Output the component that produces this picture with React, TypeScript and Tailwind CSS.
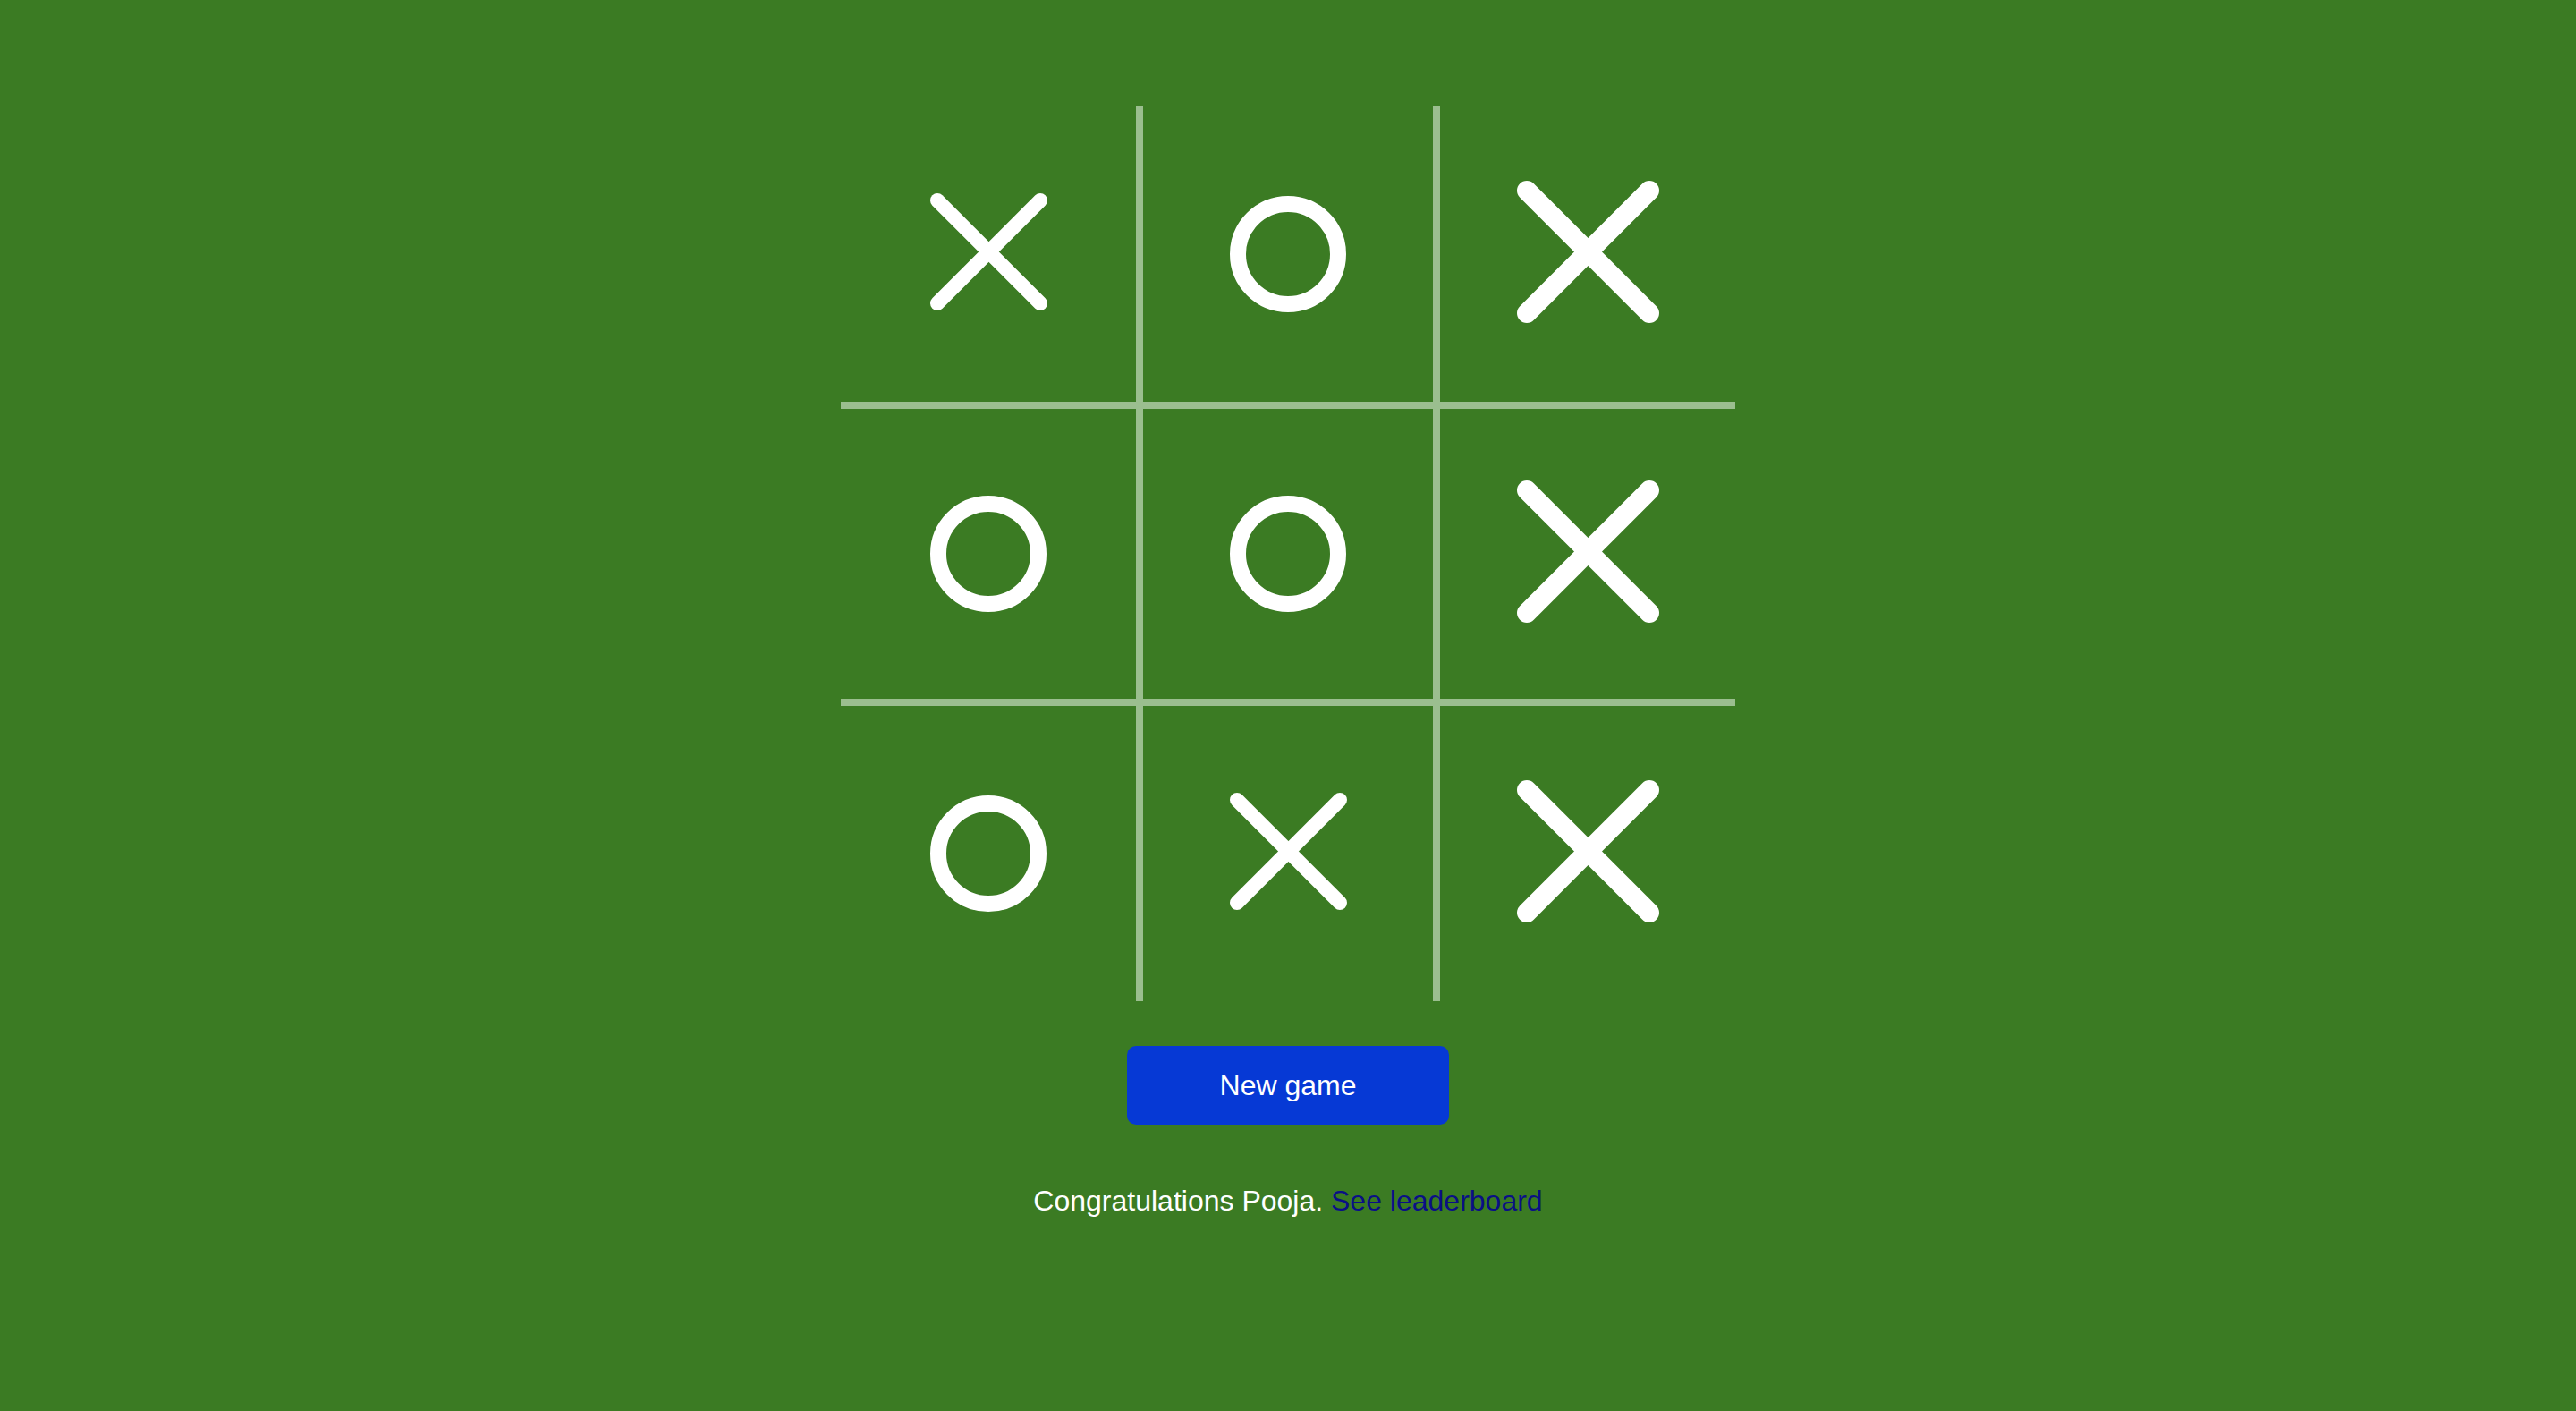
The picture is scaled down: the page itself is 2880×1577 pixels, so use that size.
import React from "react";

type Mark = "x" | "X" | "o";

const board: Mark[][] = [
  ["x", "o", "X"],
  ["o", "o", "X"],
  ["o", "x", "X"],
];

function MarkIcon({ m }: { m: Mark }) {
  if (m === "o") {
    return (
      <svg width="180" height="180" viewBox="0 0 180 180">
        <circle cx="90" cy="90" r="56" fill="none" stroke="#ffffff" strokeWidth="18" />
      </svg>
    );
  }
  const d = m === "X" ? 68.5 : 57.5;
  const sw = m === "X" ? 22 : 16;
  const cx = 90.5;
  const cy = 87.5;
  return (
    <svg width="180" height="180" viewBox="0 0 180 180">
      <g stroke="#ffffff" strokeWidth={sw} strokeLinecap="round">
        <line x1={cx - d} y1={cy - d} x2={cx + d} y2={cy + d} />
        <line x1={cx + d} y1={cy - d} x2={cx - d} y2={cy + d} />
      </g>
    </svg>
  );
}

export default function App() {
  return (
    <div
      className="min-h-[1577px] w-full bg-[#3b7b23] flex flex-col items-center pt-[119px]"
      style={{ fontFamily: '"Liberation Sans", Arial, Helvetica, sans-serif' }}
    >
      <div className="grid grid-cols-[330px_340px_330px] grid-rows-[330px_340px_330px] w-[1000px] h-[1000px]">
        {board.map((row, r) =>
          row.map((m, c) => {
            const cls = [
              "flex items-center justify-center border-[#9bbe8f]",
              c === 1 ? "border-x-8" : "",
              r === 1 ? "border-y-8" : "",
            ].join(" ");
            return (
              <div key={`${r}-${c}`} className={cls}>
                <MarkIcon m={m} />
              </div>
            );
          })
        )}
      </div>
      <button className="mt-[50px] w-[360px] h-[88px] rounded-[10px] bg-[#0639d5] text-white text-[32px] leading-none flex items-center justify-center">
        New game
      </button>
      <p className="mt-[69px] text-[32px] leading-none text-white">
        Congratulations Pooja.{" "}
        <a href="#" className="text-[#0a0f86]">
          See leaderboard
        </a>
      </p>
    </div>
  );
}
